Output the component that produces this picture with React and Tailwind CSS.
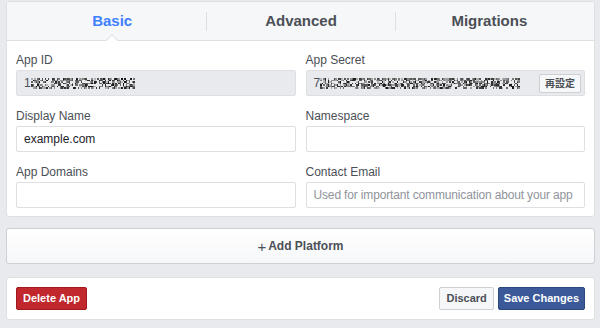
import React from 'react';

// deterministic pixel noise used to hide the ids
const makeNoise = (seed, w, h) => {
  let s = seed;
  const rnd = () => {
    s = (s * 9301 + 49297) % 233280;
    return s / 233280;
  };
  const cells = [];
  for (let y = 0; y < h; y += 1) {
    for (let x = 0; x < w; x += 1) {
      const r = rnd();
      if (r > 0.35) {
        const g = Math.floor(20 + rnd() * 170);
        cells.push({ x, y, c: `rgb(${g},${g},${g})` });
      }
    }
  }
  return cells;
};

const Noise = ({ seed, width }) => {
  const w = Math.floor(width / 1.5);
  const cells = makeNoise(seed, w, 7);
  return (
    <svg width={width} height={11} viewBox={`0 0 ${w} 7`} preserveAspectRatio="none" shapeRendering="crispEdges">
      {cells.map((p, i) => (
        <rect key={i} x={p.x} y={p.y} width={1} height={1} fill={p.c} />
      ))}
    </svg>
  );
};

const Field = ({ label, children }) => (
  <div className="flex flex-col">
    <label className="text-[12px] leading-[14px] text-[#4b4f56] mb-[3px]">{label}</label>
    {children}
  </div>
);

const TextInput = ({ value, placeholder }) => (
  <div className="h-[26px] border border-[#dddfe2] rounded-[2px] bg-white flex items-center px-[7px] text-[12px] whitespace-nowrap overflow-hidden">
    {value ? (
      <span className="text-[#1d2129]">{value}</span>
    ) : (
      <span className="text-[#90949c] tracking-[-0.15px]">{placeholder}</span>
    )}
  </div>
);

const tabs = ['Basic', 'Advanced', 'Migrations'];

export default function App() {
  return (
    <div
      className="w-[600px] h-[328px] bg-[#e9eaed] pl-[6px] pr-[5px] pt-[1px] overflow-hidden"
      style={{ fontFamily: '"Liberation Sans", Arial, "Noto Sans CJK JP", sans-serif' }}
    >
      <div className="bg-white border border-[#dddfe2] rounded-[3px]">
        <div className="relative bg-[#f6f7f9] border-b border-[#dddfe2] h-[39px] px-[11px] flex items-center">
          {tabs.map((t, i) => (
            <div key={t} className="flex-1 flex items-center h-full relative">
              {i > 0 && <div className="w-px h-[19px] bg-[#dddfe2]" />}
              <div className={`flex-1 text-center text-[15px] font-bold ${i === 0 ? 'text-[#4080ff]' : 'text-[#4b4f56]'}`}>
                {t}
              </div>
              {i === 0 && (
                <div className="absolute left-1/2 -translate-x-1/2 -bottom-[5px] w-[9px] h-[9px] bg-white border-l border-t border-[#dddfe2] rotate-45" />
              )}
            </div>
          ))}
        </div>

        <div className="grid grid-cols-2 gap-x-[10px] gap-y-[13px] px-[9px] pt-[12px] pb-[8px]">
          <Field label="App ID">
            <div className="h-[26px] border border-[#dddfe2] rounded-[2px] bg-[#e9eaed] flex items-center px-[7px] text-[12px] text-[#4b4f56]">
              <span>1</span>
              <Noise seed={17} width={104} />
            </div>
          </Field>
          <Field label="App Secret">
            <div className="h-[26px] border border-[#dddfe2] rounded-[2px] bg-[#e9eaed] flex items-center pl-[7px] pr-[3px] text-[12px] text-[#4b4f56]">
              <span>7</span>
              <Noise seed={41} width={200} />
              <div className="ml-auto h-[19px] px-[5px] flex items-center bg-[#f6f7f9] border border-[#ced0d4] rounded-[2px] text-[10px] font-bold text-[#4b4f56]">
                再設定
              </div>
            </div>
          </Field>
          <Field label="Display Name">
            <TextInput value="example.com" />
          </Field>
          <Field label="Namespace">
            <TextInput />
          </Field>
          <Field label="App Domains">
            <TextInput />
          </Field>
          <Field label="Contact Email">
            <TextInput placeholder="Used for important communication about your app" />
          </Field>
        </div>
      </div>

      <div className="mt-[11px] h-[36px] border border-[#ced0d4] rounded-[3px] bg-gradient-to-b from-white to-[#f6f7f9] flex items-center justify-center text-[12px] font-bold text-[#4b4f56]">
        <span className="font-normal text-[15px] leading-none mr-[2px]">+</span>Add Platform
      </div>

      <div className="mt-[13px] h-[43px] bg-white border border-[#dddfe2] rounded-[3px] flex items-center px-[9px]">
        <button className="h-[23px] px-[6px] bg-[#c0282d] border border-[#a2181c] rounded-[2px] text-white text-[11px] font-bold">
          Delete App
        </button>
        <div className="ml-auto flex gap-[4px]">
          <button className="h-[23px] px-[6px] bg-[#f6f7f9] border border-[#ced0d4] rounded-[2px] text-[#4b4f56] text-[11px] font-bold">
            Discard
          </button>
          <button className="h-[23px] px-[5px] bg-[#3b5998] border border-[#29487d] rounded-[2px] text-white text-[11px] font-bold">
            Save Changes
          </button>
        </div>
      </div>
    </div>
  );
}
